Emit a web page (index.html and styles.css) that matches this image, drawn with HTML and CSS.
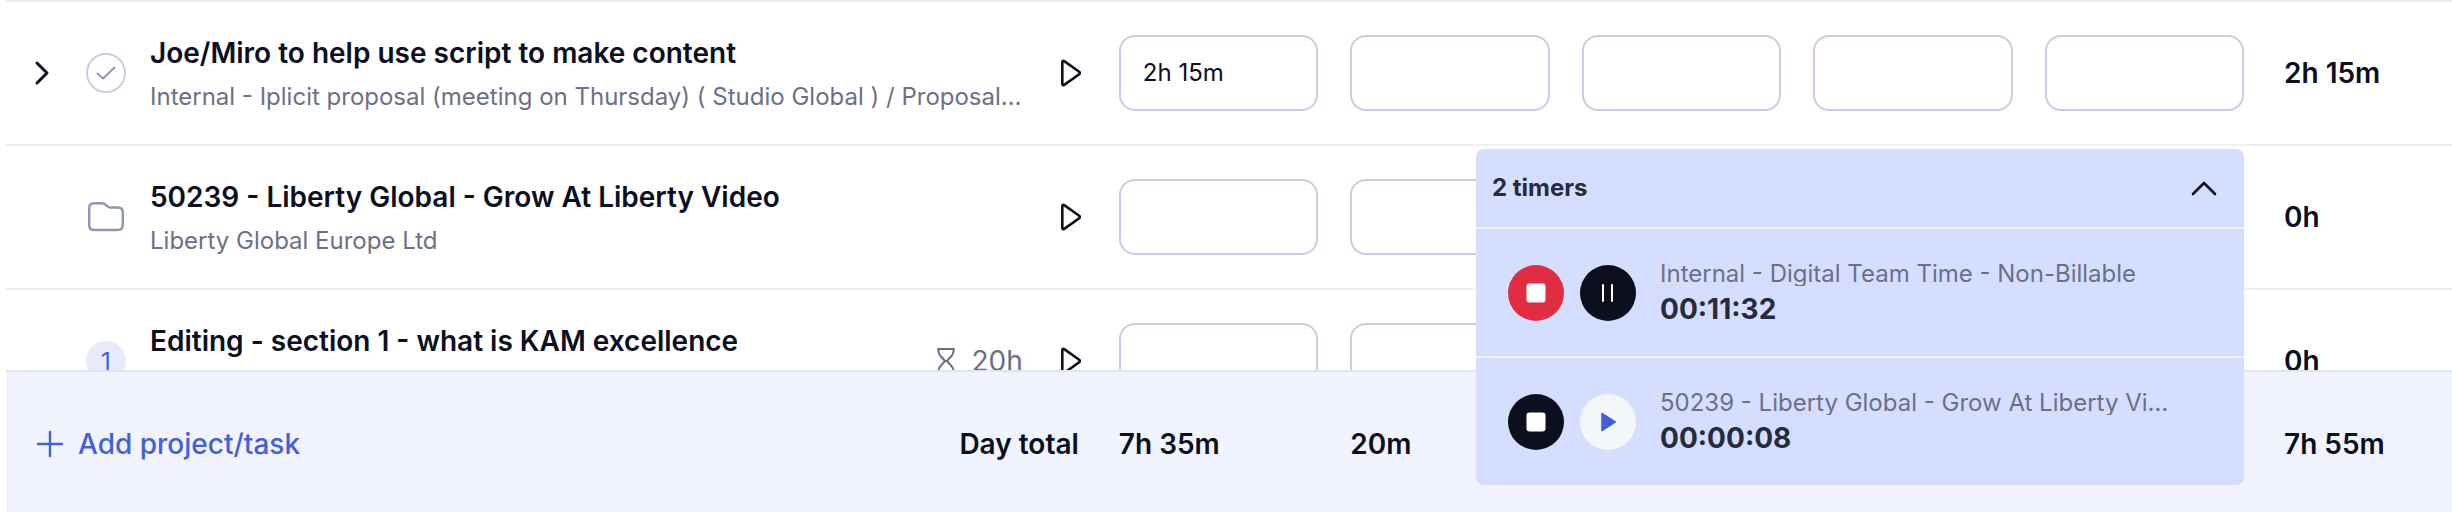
FILE: index.html
```html
<!DOCTYPE html>
<html lang="en">
<head>
<meta charset="utf-8">
<title>Timesheet</title>
<link rel="stylesheet" href="styles.css">
</head>
<body>
<main class="sheet">
  <div class="rows">
    <section class="row">
      <button class="icon-btn expand" aria-label="Expand">
        <svg width="40" height="40" viewBox="0 0 40 40" fill="none" stroke="#0b0f1e" stroke-width="3" stroke-linecap="round" stroke-linejoin="round"><path d="M15 10l10 10-10 10"/></svg>
      </button>
      <svg class="status" width="40" height="40" viewBox="0 0 40 40" fill="none"><circle cx="20" cy="20" r="19" stroke="#c8cce4" stroke-width="2"/><path d="M11.5 20.5l5.5 5 11.5-11" stroke="#8e97b8" stroke-width="2" stroke-linecap="round" stroke-linejoin="round"/></svg>
      <div class="task">
        <h2 class="task-name">Joe/Miro to help use script to make content</h2>
        <p class="task-project">Internal - Iplicit proposal (meeting on Thursday) ( Studio Global ) / Proposal and pitch deck</p>
      </div>
      <button class="icon-btn play" aria-label="Start timer">
        <svg width="40" height="40" viewBox="0 0 40 40" fill="none" stroke="#0b0f1e" stroke-width="2.600" stroke-linejoin="round"><path d="M11.3 9v22c0 1 1 1.500 1.900.9l15-10.600c.8-.7.8-1.900 0-2.600L13.200 8.100c-.9-.6-1.900-.1-1.900.9z"/></svg>
      </button>
      <div class="days">
        <input class="day" aria-label="Monday" value="2h 15m">
        <input class="day" aria-label="Tuesday">
        <input class="day" aria-label="Wednesday">
        <input class="day" aria-label="Thursday">
        <input class="day" aria-label="Friday">
      </div>
      <div class="total">2h 15m</div>
    </section>

    <section class="row">
      <span class="expand"></span>
      <svg class="status" width="40" height="40" viewBox="0 0 40 40" fill="none" stroke="#8e97b8" stroke-width="2.400" stroke-linejoin="round"><path d="M3.200 11c0-3.500 1.500-4.800 5-4.800h7.500c1.500 0 2.500.4 3.500 1.300l2.600 2.200c.7.600 1.200.8 2.200.8h7.800c3.500 0 5 1.500 5 5V28c0 3.500-1.500 5-5 5H8.200c-3.500 0-5-1.500-5-5z"/></svg>
      <div class="task">
        <h2 class="task-name">50239 - Liberty Global - Grow At Liberty Video</h2>
        <p class="task-project">Liberty Global Europe Ltd</p>
      </div>
      <button class="icon-btn play" aria-label="Start timer">
        <svg width="40" height="40" viewBox="0 0 40 40" fill="none" stroke="#0b0f1e" stroke-width="2.600" stroke-linejoin="round"><path d="M11.3 9v22c0 1 1 1.500 1.900.9l15-10.600c.8-.7.8-1.900 0-2.600L13.200 8.100c-.9-.6-1.900-.1-1.900.9z"/></svg>
      </button>
      <div class="days">
        <input class="day" aria-label="Monday">
        <input class="day" aria-label="Tuesday">
        <input class="day" aria-label="Wednesday">
        <input class="day" aria-label="Thursday">
        <input class="day" aria-label="Friday">
      </div>
      <div class="total">0h</div>
    </section>

    <section class="row">
      <span class="expand"></span>
      <span class="status count">1</span>
      <div class="task">
        <h2 class="task-name">Editing - section 1 - what is KAM excellence</h2>
        <p class="task-project"></p>
      </div>
      <div class="estimate">
        <svg width="20" height="28" viewBox="0 0 20 28" fill="none" stroke="#6b7088" stroke-width="2" stroke-linecap="round" stroke-linejoin="round"><path d="M2 2h16M2 26h16M2.500 2v2.500c0 2 1 3.500 2.500 5L9 14l-4 4.500c-1.500 1.500-2.500 3-2.500 5V26M17.500 2v2.500c0 2-1 3.500-2.500 5L11 14l4 4.500c1.500 1.500 2.500 3 2.500 5V26M9 14h2"/></svg>
        <span>20h</span>
      </div>
      <button class="icon-btn play" aria-label="Start timer">
        <svg width="40" height="40" viewBox="0 0 40 40" fill="none" stroke="#0b0f1e" stroke-width="2.600" stroke-linejoin="round"><path d="M11.3 9v22c0 1 1 1.500 1.900.9l15-10.600c.8-.7.8-1.900 0-2.600L13.200 8.100c-.9-.6-1.900-.1-1.900.9z"/></svg>
      </button>
      <div class="days">
        <input class="day" aria-label="Monday">
        <input class="day" aria-label="Tuesday">
        <input class="day" aria-label="Wednesday">
        <input class="day" aria-label="Thursday">
        <input class="day" aria-label="Friday">
      </div>
      <div class="total">0h</div>
    </section>
  </div>

  <footer class="footer">
    <button class="add">
      <svg width="28" height="28" viewBox="0 0 28 28" fill="none" stroke="#4160d9" stroke-width="2.400" stroke-linecap="round"><path d="M14 2v24M2 14h24"/></svg>
      Add project/task
    </button>
    <div class="day-label">Day total</div>
    <div class="days">
      <div class="day-total">7h 35m</div>
      <div class="day-total">20m</div>
      <div class="day-total"></div>
      <div class="day-total"></div>
      <div class="day-total"></div>
    </div>
    <div class="total">7h 55m</div>
  </footer>

  <aside class="timers">
    <header class="timers-head">
      <h3 class="timers-title">2 timers</h3>
      <button class="icon-btn" aria-label="Collapse timers">
        <svg width="40" height="40" viewBox="0 0 40 40" fill="none" stroke="#0b0f1e" stroke-width="2.600" stroke-linecap="round" stroke-linejoin="round"><path d="M9 26l11-11 11 11"/></svg>
      </button>
    </header>
    <div class="timer">
      <button class="round stop" aria-label="Stop">
        <svg width="20" height="20" viewBox="0 0 20 20"><rect x="0.500" y="0.500" width="19" height="19" rx="3" fill="#fff"/></svg>
      </button>
      <button class="round dark" aria-label="Pause">
        <svg width="20" height="20" viewBox="0 0 20 20" stroke="#fff" stroke-width="2" stroke-linecap="round"><path d="M5 2v16M14 2v16"/></svg>
      </button>
      <div class="timer-text">
        <p class="timer-name">Internal - Digital Team Time - Non-Billable</p>
        <p class="timer-time">00:11:32</p>
      </div>
    </div>
    <div class="timer">
      <button class="round dark" aria-label="Stop">
        <svg width="20" height="20" viewBox="0 0 20 20"><rect x="0.500" y="0.500" width="19" height="19" rx="3" fill="#fff"/></svg>
      </button>
      <button class="round light" aria-label="Resume">
        <svg width="20" height="20" viewBox="0 0 20 20"><path d="M4.200 1.800L17 10 4.200 18.200z" fill="#4160d9" stroke="#4160d9" stroke-width="2" stroke-linejoin="round"/></svg>
      </button>
      <div class="timer-text">
        <p class="timer-name">50239 - Liberty Global - Grow At Liberty Video</p>
        <p class="timer-time">00:00:08</p>
      </div>
    </div>
  </aside>
</main>
</body>
</html>
```
FILE: styles.css
```css
* { box-sizing: border-box; }
body {
  margin: 0;
  background: #fff;
  color: #0b0f1e;
  font-family: Inter, "Liberation Sans", sans-serif;
  font-size: 28px;
  line-height: 36px;
}
h2, h3, p { margin: 0; }
button, input { font: inherit; color: inherit; }
button { border: 0; padding: 0; background: none; cursor: pointer; }
svg { display: block; flex: none; }

.sheet {
  position: relative;
  display: flex;
  flex-direction: column;
  height: 100vh;
  padding-left: 6px;
}
.rows { flex: 1; min-height: 0; overflow: hidden; }
.row {
  display: flex;
  align-items: center;
  height: 144px;
  border-top: 2px solid #edf1f7;
}
.icon-btn { flex: none; width: 40px; height: 40px; }
.expand { flex: none; width: 40px; margin-left: 16px; }
.status { flex: none; width: 40px; margin-left: 24px; }
.count {
  height: 40px;
  border-radius: 50%;
  background: #e7eafa;
  color: #4160d9;
  font-size: 24px;
  line-height: 42px;
  text-align: center;
}
.task { flex: 1; min-width: 0; margin: 0 24px; padding-top: 4px; }
.task-name {
  font-size: 28px;
  font-weight: 600;
  line-height: 36px;
  white-space: nowrap;
}
.task-project {
  min-height: 36px;
  margin-top: 8px;
  overflow: hidden;
  color: #6b7088;
  font-size: 24px;
  line-height: 36px;
  text-overflow: ellipsis;
  white-space: nowrap;
}
.estimate {
  display: flex;
  align-items: center;
  gap: 16px;
  margin-right: 28px;
  color: #6b7088;
}
.play { margin-right: 28px; }
.days { flex: none; display: flex; gap: 32px; width: 46%; }
.day {
  flex: 1;
  min-width: 0;
  height: 76px;
  padding: 0 22px 2px;
  border: 2px solid #c8cce4;
  border-radius: 16px;
  background: #fff;
  font-size: 24px;
}
.total { flex: none; width: 168px; margin-left: 40px; font-weight: 600; }

.footer {
  display: flex;
  padding: 54px 0 50px;
  border-top: 2px solid #e0e4ef;
  background: #f1f4fe;
}
.add {
  display: flex;
  align-items: center;
  gap: 14px;
  margin-left: 30px;
  color: #4160d9;
  font-weight: 500;
}
.day-label { flex: 1; margin-right: 40px; font-weight: 600; text-align: right; }
.day-total { flex: 1; min-width: 0; font-weight: 600; }

.timers {
  position: absolute;
  right: 208px;
  bottom: 27px;
  width: 768px;
  border-radius: 8px;
  background: #d6deff;
  color: #262b3d;
}
.timers-head {
  display: flex;
  align-items: center;
  justify-content: space-between;
  height: 78px;
  padding: 0 20px 0 16px;
}
.timers-title { font-size: 24px; font-weight: 700; line-height: 36px; }
.timer {
  display: flex;
  align-items: center;
  gap: 16px;
  padding: 33px 64px 32px 32px;
  border-top: 2px solid #f1f4fe;
}
.round {
  display: grid;
  place-items: center;
  flex: none;
  width: 56px;
  height: 56px;
  border-radius: 50%;
}
.stop { background: #e12d42; }
.dark { background: #0b0f1e; }
.light { background: #f3f7fa; }
.timer-text { flex: 1; min-width: 0; margin-left: 8px; }
.timer-name {
  overflow: hidden;
  color: #6b7088;
  font-size: 24px;
  line-height: 24px;
  text-overflow: ellipsis;
  white-space: nowrap;
}
.timer-time { margin-top: 8px; font-weight: 700; line-height: 30px; }
```
